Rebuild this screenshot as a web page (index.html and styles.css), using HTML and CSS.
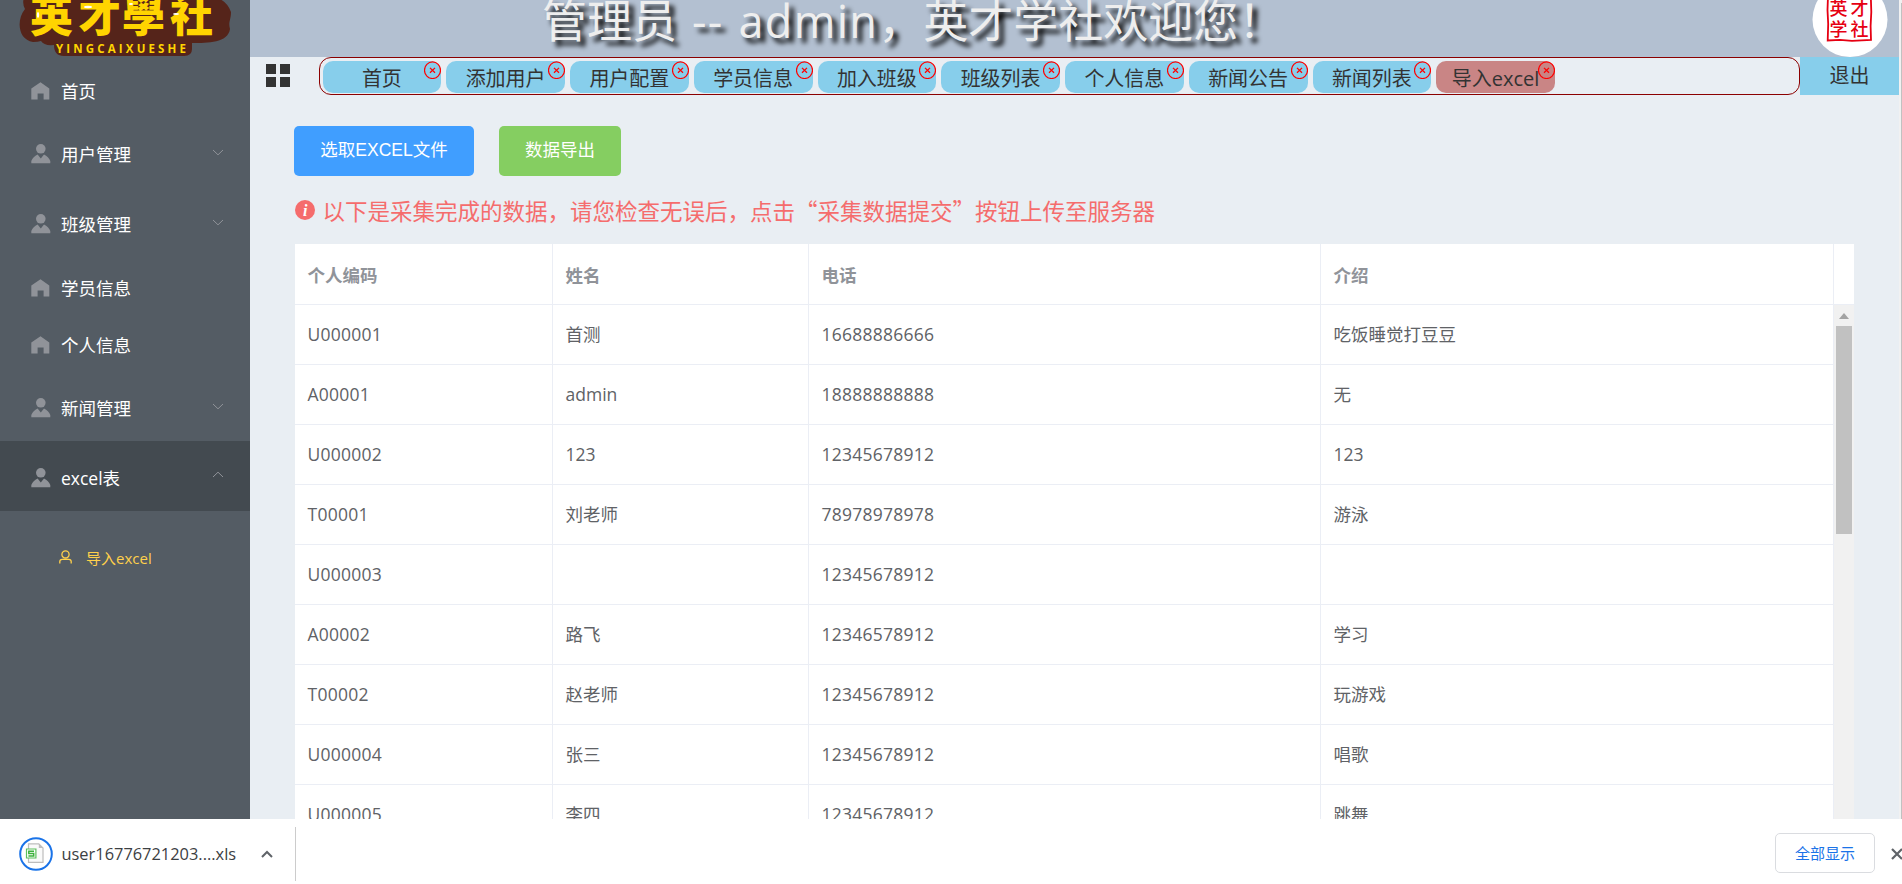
FILE: index.html
```html
<!DOCTYPE html>
<html lang="zh-CN">
<head>
<meta charset="utf-8">
<title>英才学社</title>
<link rel="stylesheet" href="styles.css">
</head>
<body>
<svg class="defs" aria-hidden="true">
  <symbol id="home" viewBox="0 0 19 18"><path d="M9.5 0.3L18.3 6.6V17.6H12.6V11.4H6.6V17.6H0.3V6.6Z"/></symbol>
  <symbol id="user" viewBox="0 0 20 20"><circle cx="9.8" cy="4.8" r="4.8"/><path d="M0.3 19.3V17Q2 12.4 6.6 10.4L9.8 14.4L13 10.4Q17.6 12.4 19.3 17V19.3Z"/></symbol>
  <symbol id="down" viewBox="0 0 12 7"><path d="M1 1L6 5.8L11 1" fill="none" stroke="currentColor"/></symbol>
  <symbol id="up" viewBox="0 0 12 7"><path d="M1 6L6 1.2L11 6" fill="none" stroke="currentColor"/></symbol>
  <symbol id="close" viewBox="0 0 17 18"><ellipse cx="8.5" cy="9.2" rx="8" ry="8.3" fill="none" stroke="red" stroke-width="1.2"/><path d="M6 6.9L11 11.7M11 6.9L6 11.7" stroke="red" stroke-width="1.3"/></symbol>
</svg>
<div class="app">
  <aside class="sidebar">
    <svg class="logo" viewBox="0 0 250 60">
      <path d="M24 -2Q22 3 25 9C16 20 18 40 33 42Q38 42 41 41Q44 46 54 45Q54 56 64 56H184Q192 56 192 49V43C208 43 228 43 230 29C228 22 231 20 231 12Q227 1 217 -2Z" fill="#55241a"/>
      <g class="logo-cn"><text x="30" y="32">英</text><text x="78" y="32">才</text><text x="122" y="32">學</text><text x="170" y="32">社</text></g>
      <g fill="#fff"><ellipse cx="38" cy="15" rx="1.2" ry="3"/><ellipse cx="88" cy="7" rx="4" ry="1.2"/><ellipse cx="131" cy="4" rx="2" ry="1"/><ellipse cx="176" cy="14" rx="3" ry="1"/></g>
      <text x="56" y="52.5" class="logo-en" textLength="130">YINGCAIXUESHE</text>
    </svg>
    <nav class="menu">
      <a class="item"><svg class="ico home"><use href="#home"/></svg><span>首页</span></a>
      <a class="item sub"><svg class="ico"><use href="#user"/></svg><span>用户管理</span><svg class="arrow"><use href="#down"/></svg></a>
      <a class="item sub"><svg class="ico"><use href="#user"/></svg><span>班级管理</span><svg class="arrow"><use href="#down"/></svg></a>
      <a class="item"><svg class="ico home"><use href="#home"/></svg><span>学员信息</span></a>
      <a class="item"><svg class="ico home"><use href="#home"/></svg><span>个人信息</span></a>
      <a class="item sub"><svg class="ico"><use href="#user"/></svg><span>新闻管理</span><svg class="arrow"><use href="#down"/></svg></a>
      <a class="item sub open"><svg class="ico"><use href="#user"/></svg><span>excel表</span><svg class="arrow"><use href="#up"/></svg></a>
      <a class="child"><svg viewBox="0 0 13 14"><circle cx="6.5" cy="4.4" r="3.6"/><path d="M0.8 13.6V11.6Q0.8 9.3 3.2 9.3H9.8Q12.2 9.3 12.2 11.6V13.6"/></svg><span>导入excel</span></a>
    </nav>
  </aside>
  <div class="body">
    <header class="header">
      <h1>管理员<span> -- admin</span>，英才学社欢迎您！</h1>
      <svg class="avatar" viewBox="0 0 76 57">
        <ellipse cx="38" cy="19.5" rx="37.5" ry="37.5" fill="#fff"/>
        <path d="M16 -4L15.5 10L16.2 24L15.7 40.5L28 39.8L40 40.8L59 40L58.6 26L59.3 12L58.8 -4" fill="none" stroke="#e60012" stroke-width="1.8"/>
        <text x="17.5" y="15">英</text><text x="38.5" y="15">才</text><text x="17.5" y="36">学</text><text x="38.5" y="36">社</text>
      </svg>
    </header>
    <div class="tabbar">
      <div class="toggle"><i></i><i></i><i></i><i></i></div>
      <div class="tabs">
        <div class="tab">首页<svg><use href="#close"/></svg></div>
        <div class="tab">添加用户<svg><use href="#close"/></svg></div>
        <div class="tab">用户配置<svg><use href="#close"/></svg></div>
        <div class="tab">学员信息<svg><use href="#close"/></svg></div>
        <div class="tab">加入班级<svg><use href="#close"/></svg></div>
        <div class="tab">班级列表<svg><use href="#close"/></svg></div>
        <div class="tab">个人信息<svg><use href="#close"/></svg></div>
        <div class="tab">新闻公告<svg><use href="#close"/></svg></div>
        <div class="tab">新闻列表<svg><use href="#close"/></svg></div>
        <div class="tab active">导入excel<svg><use href="#close"/></svg></div>
      </div>
      <div class="exit">退出</div>
    </div>
    <main class="main">
      <div class="actions"><button class="btn primary">选取EXCEL文件</button><button class="btn success">数据导出</button></div>
      <div class="notice"><svg viewBox="0 0 20 20"><circle cx="10" cy="10" r="10"/><text x="10.2" y="15.6">i</text></svg><span>以下是采集完成的数据，请您检查无误后，点击“采集数据提交”按钮上传至服务器</span></div>
      <div class="table">
        <div class="row head"><div>个人编码</div><div>姓名</div><div>电话</div><div>介绍</div></div>
        <div class="scroll">
          <div class="rows">
            <div class="row"><div>U000001</div><div>首测</div><div>16688886666</div><div>吃饭睡觉打豆豆</div></div>
            <div class="row"><div>A00001</div><div>admin</div><div>18888888888</div><div>无</div></div>
            <div class="row"><div>U000002</div><div>123</div><div>12345678912</div><div>123</div></div>
            <div class="row"><div>T00001</div><div>刘老师</div><div>78978978978</div><div>游泳</div></div>
            <div class="row"><div>U000003</div><div></div><div>12345678912</div><div></div></div>
            <div class="row"><div>A00002</div><div>路飞</div><div>12346578912</div><div>学习</div></div>
            <div class="row"><div>T00002</div><div>赵老师</div><div>12345678912</div><div>玩游戏</div></div>
            <div class="row"><div>U000004</div><div>张三</div><div>12345678912</div><div>唱歌</div></div>
            <div class="row"><div>U000005</div><div>李四</div><div>12345678912</div><div>跳舞</div></div>
          </div>
          <div class="track"><i class="tri"></i><i class="thumb"></i></div>
        </div>
      </div>
    </main>
  </div>
  <div class="page-track"><i></i></div>
</div>
<footer class="downloads">
  <svg class="file" viewBox="0 0 34 34">
    <circle cx="17" cy="17" r="15.8" fill="#fff" stroke="#1a73e8" stroke-width="2"/>
    <path d="M9.5 6.8H19.8L24 11V25.4H9.5Z" fill="#fafafa" stroke="#bdbdbd" stroke-width="1.2"/><path d="M19.8 6.8V11H24Z" fill="#bdbdbd"/>
    <path d="M7.5 12H16.9V21H7.5Z" fill="#fff" stroke="#5cc05c" stroke-width="1.2"/><path d="M15 14.2H9.8V16.5H14.7V18.9H9.4" fill="none" stroke="#3db13d" stroke-width="1.5"/>
  </svg>
  <span class="name">user16776721203....xls</span>
  <svg class="caret" viewBox="0 0 12 8"><path d="M1 7L6 2L11 7" fill="none" stroke="#5f6368" stroke-width="2"/></svg>
  <i class="divider"></i>
  <button class="all">全部显示</button>
  <svg class="x" viewBox="0 0 12 12"><path d="M1 1L11 11M11 1L1 11" stroke="#5f6368" stroke-width="2.2"/></svg>
</footer>
</body>
</html>
```
FILE: styles.css
```css
* { box-sizing: border-box; }
body {
  margin: 0;
  width: 1902px;
  height: 884px;
  overflow: hidden;
  font-family: "Open Sans", "Noto Sans CJK SC", sans-serif;
  font-size: 17.5px;
  background: #fff;
}
.defs { position: absolute; width: 0; height: 0; }
.app { display: flex; height: 819px; overflow: hidden; }

.sidebar { width: 250px; background: #545c64; color: #fff; }
.logo { display: block; width: 250px; height: 60px; }
.logo-cn { font: 900 43px "Noto Sans CJK TC", sans-serif; fill: #ffd400; }
.logo-en { font: 700 11.5px "Open Sans", sans-serif; fill: #ffd400; }
.item {
  display: flex;
  align-items: center;
  height: 57px;
  padding: 0 26px 0 31px;
}
.item.sub { height: 70px; }
.item.open { background: #434a50; }
.item span { flex: 1; padding-top: 3px; }
.ico { width: 20px; height: 20px; margin: 4px 10px 0 0; fill: #909399; }
.ico.home { width: 19px; height: 18px; margin: 5px 11px 0 0; }
.arrow { width: 12px; height: 7px; margin-top: 1px; color: #909399; }
.open .arrow { margin-top: -3px; }
.child {
  display: flex;
  align-items: center;
  gap: 14.5px;
  height: 62px;
  margin-top: 15px;
  padding-left: 58.5px;
  font-size: 15px;
  color: #ffd04b;
}
.child svg { width: 13px; height: 14px; fill: none; stroke: #ffd04b; stroke-width: 1.3; }

.body { display: flex; flex-direction: column; width: 1649px; background: #e9eef3; }
.header {
  display: flex;
  justify-content: space-between;
  height: 57px;
  padding: 0 11px 0 292px;
  background: #b3c0d1;
}
.header h1 {
  margin: -9px 0 0;
  font-size: 45px;
  font-weight: 400;
  line-height: 60px;
  color: #eee;
  text-shadow: 5px 5px 5px #000;
  white-space: nowrap;
}
.header h1 span { letter-spacing: 1.3px; word-spacing: 2px; }
.avatar { width: 76px; height: 57px; }
.avatar text { font: 500 18px "Noto Sans CJK SC", sans-serif; fill: #e60012; }

.tabbar { display: flex; height: 38px; color: #333; font-size: 20px; }
.toggle {
  display: grid;
  grid-template: 10px 10px / 10px 10px;
  gap: 3px 4px;
  width: 69px;
  padding: 7px 0 0 16px;
}
.toggle i { background: #333; }
.tabs {
  display: flex;
  gap: 5px;
  width: 1481px;
  padding: 3px 0 0 2.5px;
  border: 1px solid #8b0000;
  border-radius: 12px;
}
.tab {
  position: relative;
  width: 118.75px;
  height: 32px;
  border-radius: 10px;
  background: #87ceeb;
  line-height: 36px;
  text-align: center;
}
.tab svg { position: absolute; right: 0; top: 0; width: 17px; height: 18px; }
.tab.active { background: #c98585; }
.exit { flex: 1; background: #87ceeb; line-height: 38px; text-align: center; }

.main { padding: 31px 45px 0 44px; }
.actions { display: flex; gap: 25px; }
.btn {
  height: 50px;
  padding: 0 0 5px;
  border: 0;
  border-radius: 5px;
  color: #fff;
  font: 17.5px "Liberation Sans", "Noto Sans CJK SC", sans-serif;
}
.primary { width: 180px; background: #409eff; }
.success { width: 122px; background: #85ce61; }
.notice {
  display: flex;
  align-items: center;
  gap: 7.5px;
  height: 68px;
  padding-left: 1px;
  color: #f56c6c;
  font: 22.5px/68px "Noto Sans CJK SC", sans-serif;
}
.notice svg { width: 20px; height: 20px; fill: #f56c6c; }
.notice text { font: italic 700 16px "Liberation Serif", serif; fill: #fff; text-anchor: middle; }

.table { margin-left: 1px; color: #606266; background: #fff; }
.row {
  display: grid;
  grid-template-columns: 258px 256px 512px 513px;
  height: 60px;
  border-bottom: 1px solid #ebeef5;
  line-height: 59px;
}
.row div { padding-left: 12.5px; border-right: 1px solid #ebeef5; }
.row.head { height: 61px; color: #909399; font-weight: 700; line-height: 62px; }
.rows .row div:nth-child(odd) { letter-spacing: 0.25px; }
.scroll { display: flex; }
.track { width: 20px; padding: 8px 2px 0; background: #f1f1f1; }
.tri {
  display: block;
  margin: 0 auto 7px;
  width: 10px;
  border: 5px solid transparent;
  border-top: 0;
  border-bottom: 6px solid #a3a3a3;
}
.thumb { display: block; height: 208px; background: #c1c1c1; }
.page-track { width: 3px; padding: 3px 0 0 2px; background: #f1f1f1; }
.page-track i { display: block; height: 816px; background: #c1c1c1; }

.downloads {
  display: flex;
  align-items: center;
  width: 1920px;
  height: 65px;
  padding: 0 0 0 18.5px;
}
.file { width: 34px; height: 34px; margin-top: 4px; }
.name { width: 208.5px; padding: 3px 0 0 9px; font-size: 16.4px; color: #3c4043; }
.caret { width: 12px; height: 8px; margin-top: 4px; }
.divider { width: 1px; height: 54px; margin: 5px 1479px 0 22px; background: #ccc; }
.all {
  width: 100px;
  height: 40px;
  margin: 3px 16px 0 0;
  padding: 0 0 1px;
  border: 1px solid #dadce0;
  border-radius: 5px;
  background: #fff;
  color: #1a73e8;
  font: 15px "Noto Sans CJK SC", sans-serif;
}
.x { width: 12px; height: 12px; margin-top: 4px; }
```
